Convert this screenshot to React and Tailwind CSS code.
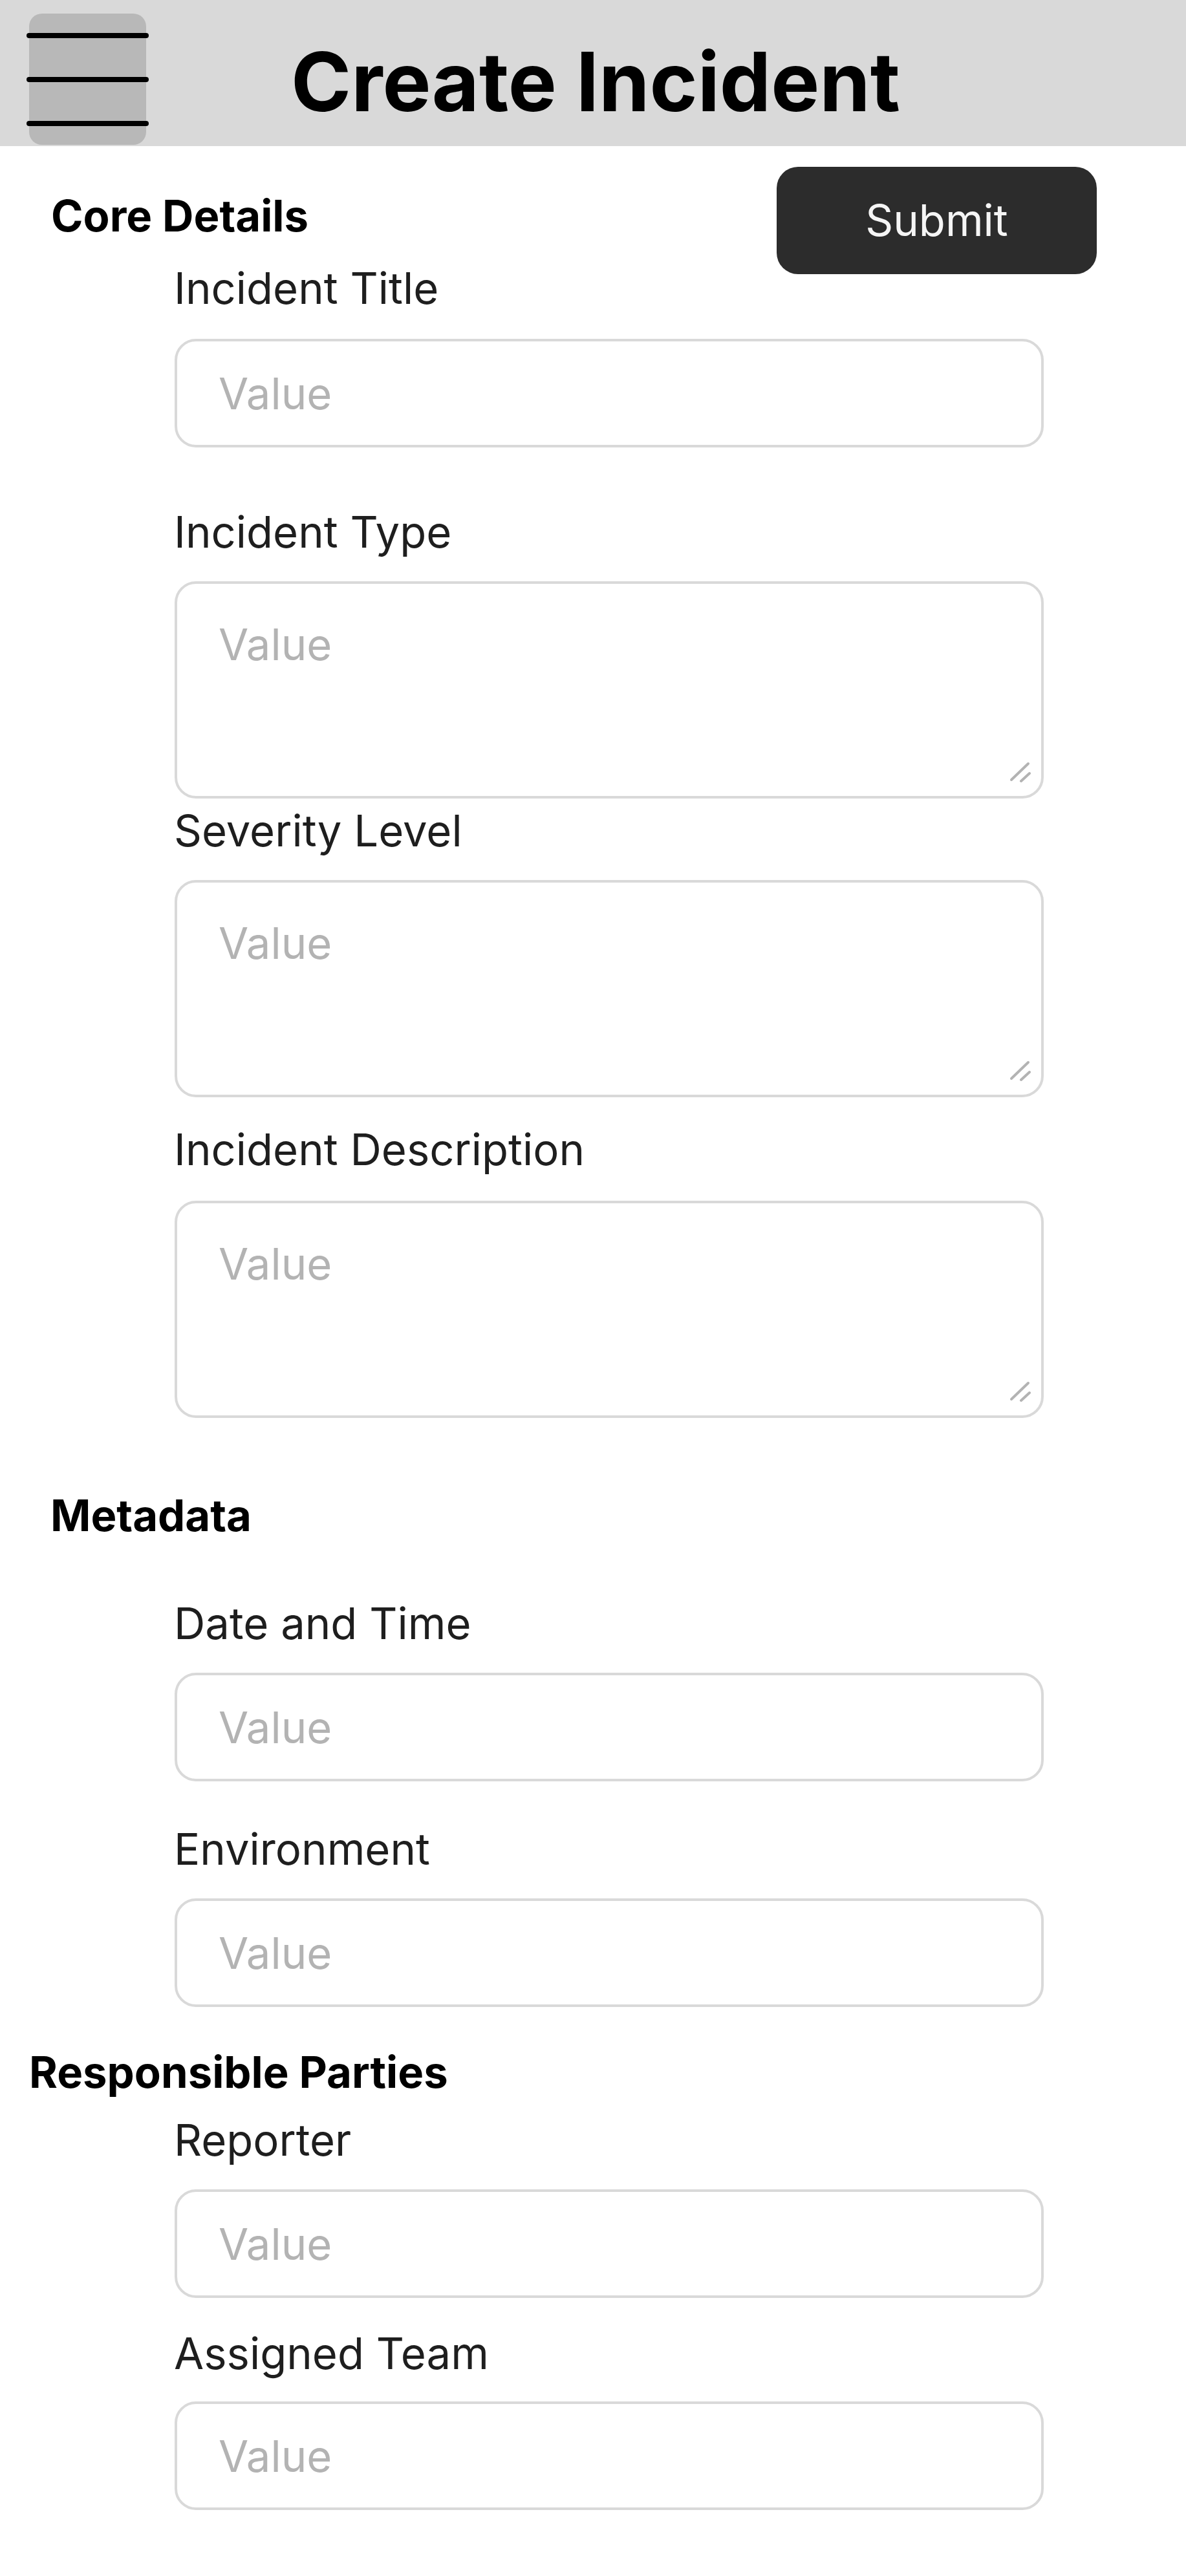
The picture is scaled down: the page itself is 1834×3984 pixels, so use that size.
import React from 'react';

const font = { fontFamily: 'Inter, "Noto Sans", sans-serif' };

const Label = ({ children, className = '' }) => (
  <label className={`block pl-[269px] text-[67px] leading-[92px] text-[#1e1e1e] ${className}`}>{children}</label>
);

const TextInput = ({ className = '' }) => (
  <div className={`pl-[270px] ${className}`}>
    <input
      placeholder="Value"
      className="block w-[1344px] h-[168px] px-[64px] border-4 border-[#d9d9d9] rounded-[33px] bg-white text-[67px] text-[#1e1e1e] placeholder:text-[#b3b3b3] outline-none"
    />
  </div>
);

const TextArea = ({ className = '' }) => (
  <div className={`pl-[270px] ${className}`}>
    <div className="relative w-[1344px]">
      <textarea
        placeholder="Value"
        className="block w-full h-[336px] px-[64px] pt-[48px] border-4 border-[#d9d9d9] rounded-[33px] bg-white text-[67px] leading-[92px] text-[#1e1e1e] placeholder:text-[#b3b3b3] outline-none resize-none"
      />
      {/* resize grip */}
      <svg className="absolute right-[20px] bottom-[22px]" width="40" height="40" viewBox="0 0 40 40">
        <line x1="10" y1="33" x2="36" y2="8" stroke="#b3b3b3" strokeWidth="4" strokeLinecap="round" />
        <line x1="25" y1="35" x2="38" y2="23" stroke="#b3b3b3" strokeWidth="4" strokeLinecap="round" />
      </svg>
    </div>
  </div>
);

const Heading = ({ children, className = '' }) => (
  <h2 className={`text-[67px] leading-[92px] font-bold text-black ${className}`}>{children}</h2>
);

export default function App() {
  return (
    <div className="w-[1834px] min-h-[3984px] bg-white flex flex-col pb-[100px]" style={font}>
      {/* top bar */}
      <header className="h-[226px] bg-[#d9d9d9] flex items-start">
        <button className="ml-[45px] mt-[21px] w-[181px] h-[203px] rounded-[20px] bg-[#b8b8b8] flex flex-col pt-[30px] gap-[60px]">
          <span className="block h-[8px] -mx-[4px] rounded-full bg-black" />
          <span className="block h-[8px] -mx-[4px] rounded-full bg-black" />
          <span className="block h-[8px] -mx-[4px] rounded-full bg-black" />
        </button>
        <h1 className="ml-[224px] mt-[50px] text-[126px] leading-[1.21] font-bold text-black whitespace-nowrap">
          Create Incident
        </h1>
      </header>

      {/* core details */}
      <div className="mt-[32px] flex items-start justify-between pl-[79px] pr-[138px]">
        <Heading className="mt-[30px]">Core Details</Heading>
        <button className="w-[495px] h-[166px] rounded-[33px] bg-[#2c2c2c] text-[#f5f5f5] text-[67px]">
          Submit
        </button>
      </div>
      <Label className="-mt-[24px]">Incident Title</Label>
      <TextInput className="mt-[32px]" />
      <Label className="mt-[85px]">Incident Type</Label>
      <TextArea className="mt-[30px]" />
      <Label className="mt-[4px]">Severity Level</Label>
      <TextArea className="mt-[30px]" />
      <Label className="mt-[35px]">Incident Description</Label>
      <TextArea className="mt-[33px]" />

      {/* metadata */}
      <Heading className="mt-[105px] pl-[78px]">Metadata</Heading>
      <Label className="mt-[75px]">Date and Time</Label>
      <TextInput className="mt-[30px]" />
      <Label className="mt-[59px]">Environment</Label>
      <TextInput className="mt-[30px]" />

      {/* responsible parties */}
      <Heading className="mt-[55px] pl-[45px]">Responsible Parties</Heading>
      <Label className="mt-[13px]">Reporter</Label>
      <TextInput className="mt-[30px]" />
      <Label className="mt-[40px]">Assigned Team</Label>
      <TextInput className="mt-[28px]" />
    </div>
  );
}
